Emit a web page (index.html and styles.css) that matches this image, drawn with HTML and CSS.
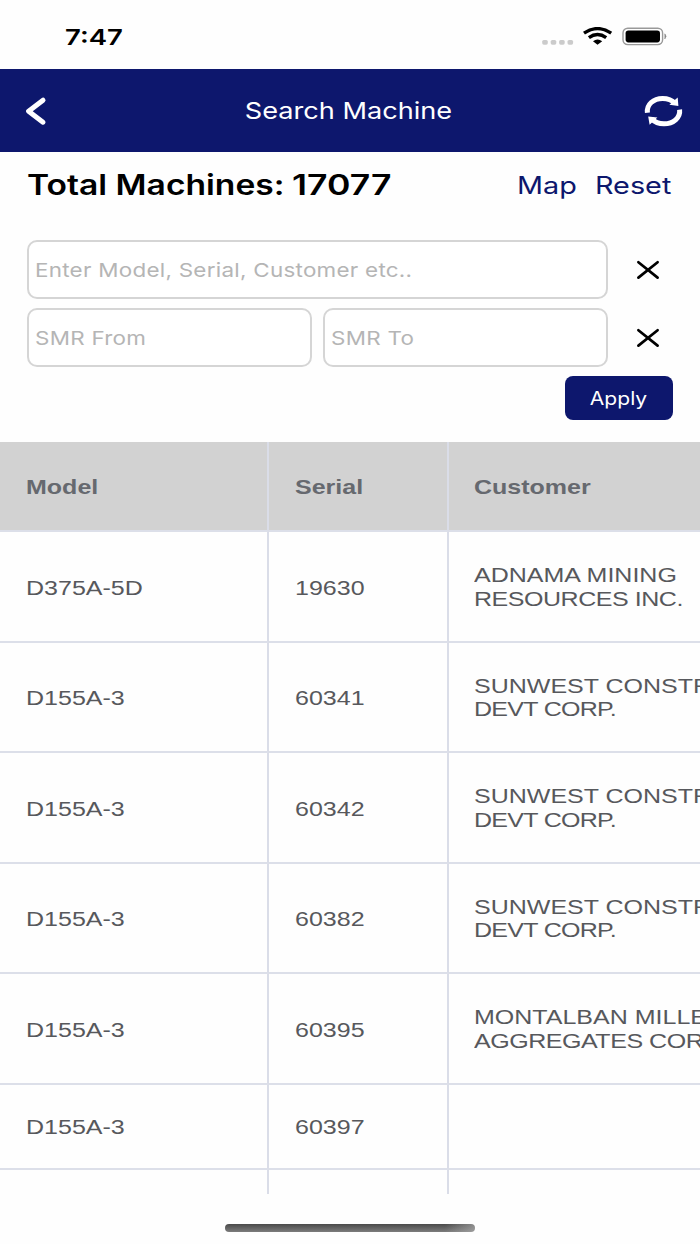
FILE: index.html
```html
<!DOCTYPE html>
<html lang="en">
<head>
<meta charset="utf-8">
<title>Search Machine</title>
<link rel="stylesheet" href="styles.css">
</head>
<body>
<div class="screen">
  <div class="status">
    <span class="wide clock">7:47</span>
    <svg class="status-icons" width="126" height="20" viewBox="0 0 126 20">
      <g fill="#cbcbcb"><rect x="1.2" y="12.9" width="5.6" height="4.8" rx="1.6"/><rect x="9.7" y="12.9" width="5.6" height="4.8" rx="1.6"/><rect x="18.1" y="12.9" width="5.6" height="4.8" rx="1.6"/><rect x="26.5" y="12.9" width="5.6" height="4.8" rx="1.6"/></g>
      <g fill="none" stroke="#000" stroke-width="3.4">
        <path d="M43 6.2Q56.5 -3 70.2 6.2"/>
        <path d="M47.9 10.6Q56.5 4.4 65.2 10.6"/>
      </g>
      <path d="M52 14.2Q56.5 10.6 61.2 14.2L56.5 17.7Z"/>
      <rect x="82" y="1.2" width="39.6" height="16.4" rx="4.8" fill="none" stroke="#999" stroke-width="1.4"/>
      <rect x="84.6" y="3.6" width="34.4" height="11.8" rx="2.8"/>
      <path d="M123.8 6.8Q126.4 9.3 123.8 12Z" fill="#888" stroke="#888" stroke-width=".5"/>
    </svg>
  </div>
  <header class="navbar">
    <svg class="back" width="22" height="30" viewBox="0 0 22 30"><path d="M18 4.2L3.6 15.2L18 26.2" fill="none" stroke="#fff" stroke-width="5" stroke-linecap="round" stroke-linejoin="round"/></svg>
    <h1 class="wide nav-title">Search Machine</h1>
    <svg class="refresh" width="40" height="34" viewBox="0 0 40 34">
      <g fill="none" stroke="#fff" stroke-width="5">
        <path d="M4.4 18.8C3.4 10.6 10.4 4.4 19.6 4.4C25 4.4 29.4 6.4 32 9.2"/>
        <path d="M36.6 15.6C37.6 23.8 30.2 29.8 21 29.8C15.6 29.8 11.4 27.8 8.8 25"/>
      </g>
      <path d="M34.7 3.4L35.4 12L26.4 10.8ZM5.2 22.4L14.4 23.6L6.6 30.8Z" fill="#fff"/>
    </svg>
  </header>
  <div class="summary">
    <h2 class="total"><span class="wide total-label">Total Machines:</span><span class="wide total-count">17077</span></h2>
    <a class="wide link map">Map</a>
    <a class="wide link reset">Reset</a>
  </div>
  <div class="filters">
    <div class="filter-row">
      <div class="field"><span class="wide hint">Enter Model, Serial, Customer etc..</span></div>
      <svg class="clear" width="24" height="20" viewBox="0 0 24 20"><path d="M2.4 2.2L21.6 17.6M21.6 2.2L2.4 17.6" fill="none" stroke="#000" stroke-width="2.7" stroke-linecap="round"/></svg>
    </div>
    <div class="filter-row">
      <div class="field"><span class="wide hint">SMR From</span></div>
      <div class="field"><span class="wide hint">SMR To</span></div>
      <svg class="clear" width="24" height="20" viewBox="0 0 24 20"><path d="M2.4 2.2L21.6 17.6M21.6 2.2L2.4 17.6" fill="none" stroke="#000" stroke-width="2.7" stroke-linecap="round"/></svg>
    </div>
    <div class="apply"><span class="wide apply-label">Apply</span></div>
  </div>
  <div class="table">
    <div class="row head"><div class="cell"><b class="wide">Model</b></div><div class="cell"><b class="wide">Serial</b></div><div class="cell"><b class="wide">Customer</b></div></div>
    <div class="row"><div class="cell"><span class="wide">D375A-5D</span></div><div class="cell"><span class="wide">19630</span></div><div class="cell customer"><span class="wide">ADNAMA MINING<br><span class="tight">RESOURCES INC.</span></span></div></div>
    <div class="row"><div class="cell"><span class="wide">D155A-3</span></div><div class="cell"><span class="wide">60341</span></div><div class="cell customer"><span class="wide">SUNWEST CONSTR<br><span class="tighter">DEVT CORP.</span></span></div></div>
    <div class="row"><div class="cell"><span class="wide">D155A-3</span></div><div class="cell"><span class="wide">60342</span></div><div class="cell customer"><span class="wide">SUNWEST CONSTR<br><span class="tighter">DEVT CORP.</span></span></div></div>
    <div class="row"><div class="cell"><span class="wide">D155A-3</span></div><div class="cell"><span class="wide">60382</span></div><div class="cell customer"><span class="wide">SUNWEST CONSTR<br><span class="tighter">DEVT CORP.</span></span></div></div>
    <div class="row"><div class="cell"><span class="wide">D155A-3</span></div><div class="cell"><span class="wide">60395</span></div><div class="cell customer"><span class="wide">MONTALBAN MILLE<br><span class="tight">AGGREGATES COR</span></span></div></div>
    <div class="row short"><div class="cell"><span class="wide">D155A-3</span></div><div class="cell"><span class="wide">60397</span></div><div class="cell"></div></div>
    <div class="row last"><div class="cell"></div><div class="cell"></div><div class="cell"></div></div>
  </div>
  <div class="home"></div>
</div>
</body>
</html>
```
FILE: styles.css
```css
* { box-sizing: border-box; }
body { margin: 0; background: #fefefe; }
.screen {
  display: flex; flex-direction: column;
  width: 700px; height: 1244px; overflow: hidden;
  font-family: Inter, "Liberation Sans", sans-serif;
}
svg { display: block; flex: none; }
/* Horizontally extended lettering */
.wide {
  display: block; flex: none; margin: 0; white-space: nowrap;
  transform: scaleX(var(--stretch, 1.22)); transform-origin: left center;
}
.status { height: 69px; flex: none; display: flex; justify-content: space-between; padding: 26px 33px 0 64.5px; }
.clock { --stretch: 1.25; font-size: 22px; line-height: 22px; font-weight: 600; }
.status-icons { margin-top: 1px; }
.navbar {
  height: 83px; flex: none; background: #0d176d; color: #fff;
  display: flex; align-items: center; justify-content: space-between; padding: 0 17px 0 25px;
}
.nav-title { --stretch: 1.18; font-size: 23px; line-height: 28px; font-weight: 400; transform-origin: center; padding-left: 6px; }
.summary { height: 88px; flex: none; display: flex; align-items: flex-start; padding: 17px 0 0 27px; }
.total { display: flex; width: 490px; margin: 0; font-size: 28px; line-height: 32px; font-weight: 600; }
.total-label { --stretch: 1.2; width: 265px; }
.total-count { --stretch: 1.27; }
.link { --stretch: 1.2; font-size: 24px; line-height: 34px; color: #0d176d; }
.map { width: 78px; }
.filters { height: 202px; flex: none; display: flex; flex-direction: column; gap: 9px; padding: 0 27px; }
.filter-row { display: flex; align-items: center; gap: 11px; height: 59px; flex: none; }
.field {
  flex: 1; height: 59px; display: flex; align-items: center;
  border: 2px solid #d5d5d5; border-radius: 10px; padding: 2px 0 0 5.5px; background: #fff;
}
.clear { margin: 1px 13px 0 17px; }
.hint { --stretch: 1.18; font-size: 19px; line-height: 24px; letter-spacing: .22px; color: #b5b5b5; }
.apply {
  align-self: flex-end; width: 108px; height: 44px; border-radius: 8px;
  background: #0d176d; color: #fff; display: flex; align-items: center; justify-content: center;
}
.apply-label { --stretch: 1.17; font-size: 18px; line-height: 22px; transform-origin: center; padding-top: 2px; }
.table { height: 751.5px; flex: none; overflow: hidden; font: 20.5px/23.5px "Liberation Sans", Arial, sans-serif; color: #57585c; }
.row { display: grid; grid-template-columns: 269px 179.5px 300px; height: 110.5px; }
.cell { display: flex; align-items: center; padding: 2px 0 0 25.5px; border-bottom: 2px solid #dcdfe9; border-right: 2px solid #dadde8; }
.customer { padding-top: 1px; }
.tight { letter-spacing: -.38px; }
.tighter { letter-spacing: -.58px; }
.head { height: 90px; background: #d2d2d2; color: #66696f; }
.short { height: 85.5px; }
.short .cell { padding-top: 1px; }
.last { height: 60px; }
.home { width: 250px; height: 8px; margin: 30.5px auto 0; border-radius: 4px; background: linear-gradient(90deg, transparent 88%, rgba(180,180,180,.6)), linear-gradient(#4a4a4a, #7c7c7c); }
```
